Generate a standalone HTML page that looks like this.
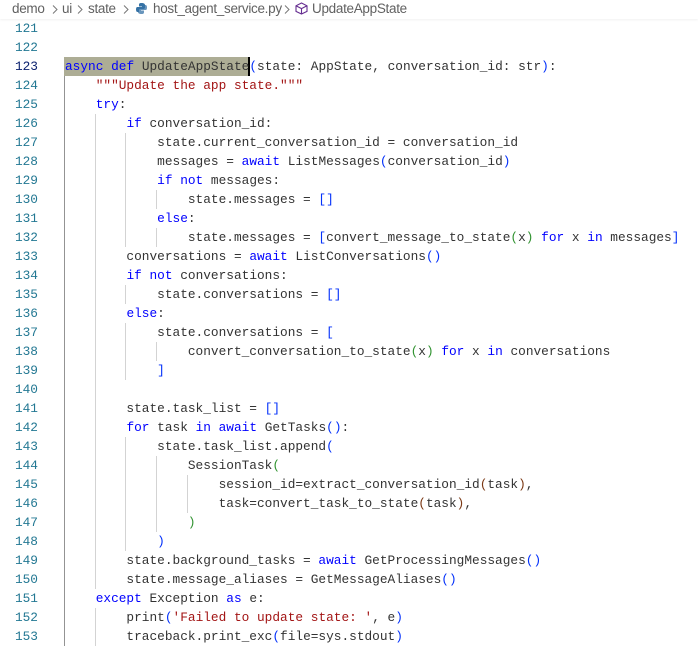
<!DOCTYPE html>
<html><head><meta charset="utf-8"><style>
body{margin:0;width:698px;height:652px;background:#fff;overflow:hidden;position:relative;font-family:"Liberation Mono",monospace;}
#bc{position:absolute;left:0;top:0;width:698px;height:19px;font:13.5px "Liberation Sans",sans-serif;color:#616161;white-space:nowrap;box-shadow:0 1px 2px rgba(0,0,0,0.06);}
#bc span{position:absolute;top:1px;letter-spacing:-0.3px}
#bc svg.ch{position:absolute;top:5px}
.ln{position:absolute;left:0;width:38px;text-align:right;font-size:12.8px;color:#237893;line-height:19px;}
.cd{position:absolute;left:65px;font-size:12.8px;color:#333;line-height:19px;white-space:pre;}
.k{color:#0000ff}.b{color:#0431fa}.g{color:#319331}.r{color:#7b3814}.s{color:#a31515}
.gd{position:absolute;width:1px;height:19px;background:#d3d3d3}
</style></head><body>
<div id="bc">
<span style="left:12px">demo</span><svg class="ch" style="left:52px" width="6" height="9"><path d="M1 0.5L5 4.5 1 8.5" fill="none" stroke="#777" stroke-width="1"/></svg>
<span style="left:62px">ui</span><svg class="ch" style="left:77px" width="6" height="9"><path d="M1 0.5L5 4.5 1 8.5" fill="none" stroke="#777" stroke-width="1"/></svg>
<span style="left:88px">state</span><svg class="ch" style="left:123px" width="6" height="9"><path d="M1 0.5L5 4.5 1 8.5" fill="none" stroke="#777" stroke-width="1"/></svg>
<svg style="position:absolute;left:135px;top:2px" width="13" height="13" viewBox="0 0 13 13"><path d="M6.5 1C4 1 4 2 4 3v1.5h3V5H2.5C1.3 5 1 6 1 7.5S1.5 10 2.5 10H4V8.3C4 7.4 4.7 7 5.5 7h3C9.3 7 10 6.3 10 5.5V3C10 2 9 1 6.5 1z" fill="#3572a5"/><path d="M6.5 12C9 12 9 11 9 10V8.5H6V8h4.5C11.7 8 12 7 12 5.5S11.5 3 10.5 3H9v1.7C9 5.6 8.3 6 7.5 6h-3C3.7 6 3 6.7 3 7.5V10c0 1 1 2 3.5 2z" fill="#3572a5" opacity=".75"/></svg>
<span style="left:153px">host_agent_service.py</span><svg class="ch" style="left:284px" width="6" height="9"><path d="M1 0.5L5 4.5 1 8.5" fill="none" stroke="#777" stroke-width="1"/></svg>
<svg style="position:absolute;left:295px;top:2px" width="13" height="13" viewBox="0 0 13 13" fill="none" stroke="#652d90" stroke-width="1.1"><path d="M6.5 1L12 3.8v5.6L6.5 12 1 9.4V3.8z M1 3.8l5.5 2.8L12 3.8 M6.5 6.6V12"/></svg>
<span style="left:312px">UpdateAppState</span>
</div>
<div style="position:absolute;left:64px;top:57px;width:185px;height:19px;background:#adad95"></div>
<div style="position:absolute;left:248px;top:57px;width:2px;height:19px;background:#000"></div>
<div id="c"></div>
<script>
var L=[
"","",
'<span class="k">async</span> <span class="k">def</span> UpdateAppState<span class="b">(</span>state: AppState, conversation_id: str<span class="b">)</span>:',
'    <span class="s">"""Update the app state."""</span>',
'    <span class="k">try</span>:',
'        <span class="k">if</span> conversation_id:',
'            state.current_conversation_id = conversation_id',
'            messages = <span class="k">await</span> ListMessages<span class="b">(</span>conversation_id<span class="b">)</span>',
'            <span class="k">if</span> <span class="k">not</span> messages:',
'                state.messages = <span class="b">[]</span>',
'            <span class="k">else</span>:',
'                state.messages = <span class="b">[</span>convert_message_to_state<span class="g">(</span>x<span class="g">)</span> <span class="k">for</span> x <span class="k">in</span> messages<span class="b">]</span>',
'        conversations = <span class="k">await</span> ListConversations<span class="b">()</span>',
'        <span class="k">if</span> <span class="k">not</span> conversations:',
'            state.conversations = <span class="b">[]</span>',
'        <span class="k">else</span>:',
'            state.conversations = <span class="b">[</span>',
'                convert_conversation_to_state<span class="g">(</span>x<span class="g">)</span> <span class="k">for</span> x <span class="k">in</span> conversations',
'            <span class="b">]</span>',
'',
'        state.task_list = <span class="b">[]</span>',
'        <span class="k">for</span> task <span class="k">in</span> <span class="k">await</span> GetTasks<span class="b">()</span>:',
'            state.task_list.append<span class="b">(</span>',
'                SessionTask<span class="g">(</span>',
'                    session_id=extract_conversation_id<span class="r">(</span>task<span class="r">)</span>,',
'                    task=convert_task_to_state<span class="r">(</span>task<span class="r">)</span>,',
'                <span class="g">)</span>',
'            <span class="b">)</span>',
'        state.background_tasks = <span class="k">await</span> GetProcessingMessages<span class="b">()</span>',
'        state.message_aliases = GetMessageAliases<span class="b">()</span>',
'    <span class="k">except</span> Exception <span class="k">as</span> e:',
'        print<span class="b">(</span><span class="s">\'Failed to update state: \'</span>, e<span class="b">)</span>',
'        traceback.print_exc<span class="b">(</span>file=sys.stdout<span class="b">)</span>'];
var h='';
function ind(s){var m=s.match(/^ */)[0].length;return m/4;}
for(var i=0;i<L.length;i++){
 var y=19+i*19,n=121+i;
 h+='<div class="ln" style="top:'+y+'px;'+(n==123?'color:#0b216f':'')+'">'+n+'</div>';
 h+='<div class="cd" style="top:'+y+'px">'+L[i]+'</div>';
 var lv;
 if(i<3)lv=0;else if(L[i]==="")lv=Math.min(ind(L[i-1]),ind(L[i+1]));else lv=ind(L[i]);
 for(var k=0;k<lv;k++){
  var x=Math.round(64+k*30.68);
  h+='<div class="gd" style="left:'+x+'px;top:'+y+'px;'+(k==0?'background:#939393':'')+'"></div>';
 }
}
document.getElementById('c').innerHTML=h;
</script>
</body></html>
